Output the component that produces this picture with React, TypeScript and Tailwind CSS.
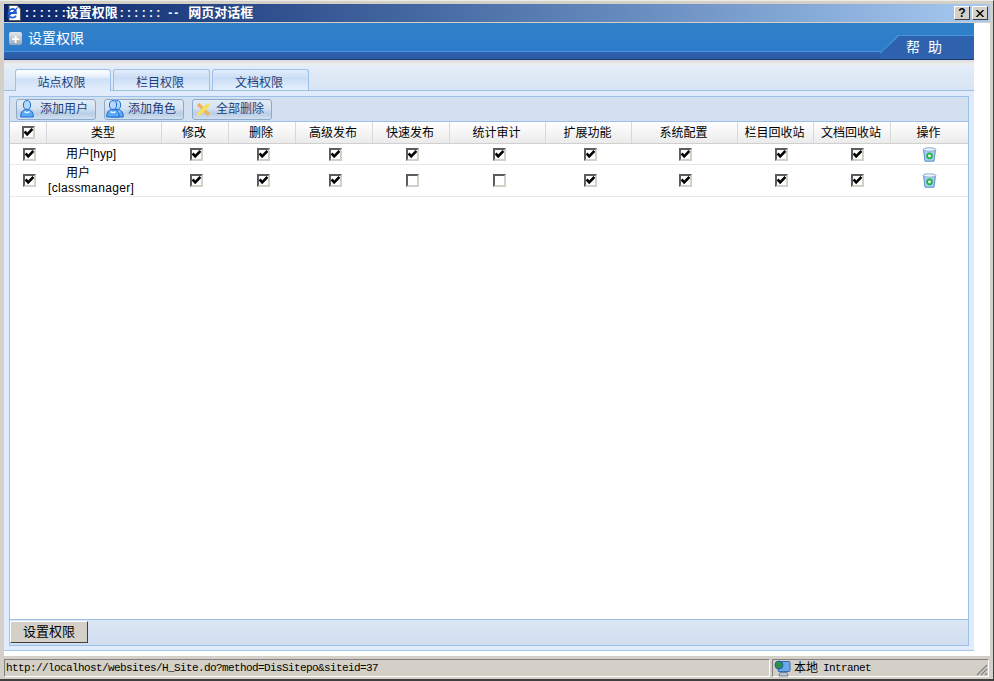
import React from 'react';

const headCols = 'grid grid-cols-[37px_115px_67px_67px_77px_77px_96px_86px_106px_76px_77px_77px]';
const rowCols = 'grid grid-cols-[38px_115px_67px_67px_77px_77px_97px_85px_105px_87px_65px_78px]';

const headers = ['类型', '修改', '删除', '高级发布', '快速发布', '统计审计', '扩展功能', '系统配置', '栏目回收站', '文档回收站', '操作'];

const rows = [
  { name: '用户[hyp]', tall: false, checks: [1, 1, 1, 1, 1, 1, 1, 1, 1] },
  { name: '[classmanager]', tall: true, checks: [1, 1, 1, 0, 0, 1, 1, 1, 1] },
];

function Check({ on = true }: { on?: boolean }) {
  return (
    <span className="block w-[13px] h-[13px] bg-white border-2 border-t-[#5c5c5c] border-l-[#5c5c5c] border-r-[#d4d0c8] border-b-[#d4d0c8]">
      {on && (
        <svg viewBox="0 0 9 9" className="block w-[9px] h-[9px]">
          <path d="M0.6 3.4 L3.2 6.4 L8.4 1" fill="none" stroke="#000" strokeWidth="2.6" />
        </svg>
      )}
    </span>
  );
}

function UserIcon({ double = false }: { double?: boolean }) {
  const person = (x: number) => (
    <g transform={`translate(${x} 0)`}>
      <ellipse cx="7" cy="5" rx="3.6" ry="4.4" fill="#b4d6fb" stroke="#1f6fd0" />
      <path d="M0.7 17 C0.7 11 3.5 9.6 7 9.6 C10.5 9.6 13.3 11 13.3 17 Z" fill="#5aa8f6" stroke="#1f6fd0" />
      <path d="M4.5 11.5 C5.5 13 8.5 13 9.5 11.5" fill="none" stroke="#e6f2ff" strokeWidth="1.4" />
    </g>
  );
  return (
    <svg viewBox={double ? '0 0 18 18' : '0 0 14 18'} className={double ? 'w-[18px] h-[18px] shrink-0' : 'w-[14px] h-[18px] shrink-0'}>
      {double && person(4)}
      {person(0)}
    </svg>
  );
}

function CrossIcon() {
  return (
    <svg viewBox="0 0 15 15" className="w-[15px] h-[15px] shrink-0">
      <path d="M2 2 L13 13" stroke="#f2b45a" strokeWidth="3.6" />
      <path d="M13 2 L2 13" stroke="#f6e05a" strokeWidth="3.6" />
    </svg>
  );
}

function RecycleIcon() {
  return (
    <svg viewBox="0 0 15 15" className="block w-[15px] h-[15px]">
      <path d="M1.5 2.5 L13.5 2.5 L12 14.2 L3 14.2 Z" fill="#a6cdf4" stroke="#5f8fc4" />
      <ellipse cx="7.5" cy="2.5" rx="6.4" ry="1.7" fill="#eaf2fa" stroke="#8aaed4" />
      <circle cx="7.5" cy="8.8" r="2.5" fill="#d8f0d8" stroke="#1fb33a" strokeWidth="1.7" />
    </svg>
  );
}

function ToolButton({ icon, label, className }: { icon: React.ReactNode; label: string; className: string }) {
  return (
    <div className={`w-[80px] h-[21px] flex items-center rounded-[3px] border border-[#8eaacb] bg-[linear-gradient(#e2ecf8_0,#d6e2f2_45%,#b8cde6_70%,#d2e0f0_100%)] text-[#1c3f78] whitespace-nowrap ${className}`}>
      {icon}
      <span>{label}</span>
    </div>
  );
}

function Tab({ label, active = false, width }: { label: string; active?: boolean; width: string }) {
  return (
    <div
      className={
        active
          ? `${width} h-[22px] -mb-px pt-[5px] pr-[3px] flex items-center justify-center rounded-t-[3px] border border-b-0 border-[#9dc0e8] bg-[linear-gradient(#ffffff_0,#e8f1fc_30%,#cfe1f8_45%,#e2edfb_100%)] text-[#1c3f78]`
          : `${width} h-[21px] pt-[5px] pr-[3px] flex items-center justify-center rounded-t-[3px] border border-b-0 border-[#9dc0e8] bg-[linear-gradient(#e4eefb_0,#c9dcf5_40%,#e6f0fc_100%)] text-[#1c3f78]`
      }
    >
      {label}
    </div>
  );
}

export default function App() {
  return (
    <div className="w-[994px] h-[681px] overflow-hidden flex flex-col bg-[#d4d0c8] text-[12px] text-black font-['Liberation_Sans','Noto_Sans_CJK_SC',sans-serif] border-t border-t-[#ecebe6] border-b-2 border-b-[#404040] border-r border-r-[#404040]">
      <div className="h-[3px] shrink-0" />
      <div className="ml-[4px] mr-[3px] flex-1 flex flex-col min-h-0">
        {/* barra de titulo */}
        <div className="h-[18px] shrink-0 flex items-center bg-gradient-to-r from-[#0a246a] to-[#a6caf0] pl-[2px] pr-[2px] text-white font-bold whitespace-pre">
          <svg viewBox="0 0 16 16" className="w-[16px] h-[16px] shrink-0">
            <path d="M3 0.5 H11 L14.5 4 V15.5 H3 Z" fill="#fff" stroke="#555" />
            <path d="M3.4 8 H10 C10 5 8.4 4 6.6 4 C4.2 4 2.6 6 2.6 8.4 C2.6 11 4.4 12.6 6.6 12.6 C8.2 12.6 9.4 11.8 10 10.6" fill="none" stroke="#2060d8" strokeWidth="1.8" />
            <path d="M0.8 11.5 C4 10 9 6 11.5 2.5" fill="none" stroke="#1848b8" strokeWidth="1.1" />
          </svg>
          <span className="ml-[3px]">: : : : : :</span>
          <span className="text-[13px]">设置权限</span>
          <span className="ml-[2px]">: : : : : :</span>
          <span className="ml-[8px] w-[20px] tracking-[2px]">--</span>
          <span className="text-[13px]">网页对话框</span>
          <div className="ml-auto flex gap-[2px]">
            <div className="w-[16px] h-[14px] flex items-center justify-center bg-[#d4d0c8] border border-t-white border-l-white border-r-[#404040] border-b-[#404040] text-black text-[12px] leading-none">?</div>
            <div className="w-[16px] h-[14px] flex items-center justify-center bg-[#d4d0c8] border border-t-white border-l-white border-r-[#404040] border-b-[#404040]">
              <svg viewBox="0 0 8 7" className="w-[8px] h-[7px]">
                <path d="M0.5 0 L7.5 7 M7.5 0 L0.5 7" stroke="#000" strokeWidth="1.4" />
              </svg>
            </div>
          </div>
        </div>
        <div className="h-px shrink-0 bg-[#d4d0c8]" />

        {/* conteudo do dialogo */}
        <div className="flex-1 min-h-0 flex flex-col bg-white">
          <div className="w-[970px] flex flex-col">
            <div className="h-[37px] shrink-0 flex justify-between bg-[linear-gradient(#3080c8_0,#2d7ccb_28px,#4a94dc_28px,#4a94dc_29px,#2f62ae_29px,#2c5aa4_36px,#1c3a6e_36px)]">
              <div className="flex items-center h-[31px] pl-[5px] gap-[6px] text-white text-[14px]">
                <span className="w-[13px] h-[13px] flex items-center justify-center rounded-[2px] bg-gradient-to-b from-[#e4e8ec] to-[#97a6b6] text-white font-bold text-[14px] leading-none">+</span>
                <span>设置权限</span>
              </div>
              <div className="self-start mt-[12px] w-[94px] h-[24px] bg-[#4a94dc] [clip-path:polygon(18px_0,100%_0,100%_100%,0_100%,0_18px)]">
                <div className="h-[24px] pl-[26px] gap-[8px] flex items-center text-white text-[14px] bg-[#2f62ae] [clip-path:polygon(19px_1px,100%_1px,100%_100%,0_100%,0_19px)]">
                  <span>帮</span>
                  <span>助</span>
                </div>
              </div>
            </div>
            <div className="h-[5px] shrink-0 bg-gradient-to-b from-[#dcdcdc] to-[#f0f0f0]" />

            <div className="h-[26px] shrink-0 flex items-end pl-[11px] gap-[2px] bg-gradient-to-b from-[#e4edf8] to-[#d8e4f3] border-b border-b-[#9fc0dc]">
              <Tab label="站点权限" active width="w-[96px]" />
              <Tab label="栏目权限" width="w-[97px]" />
              <Tab label="文档权限" width="w-[97px]" />
            </div>

            <div className="h-[560px] shrink-0 px-[5px] pt-[5px] bg-[#e0ecfb] border-b border-b-[#a8c8e8]">
              <div className="h-[550px] flex flex-col border border-[#9dc0e8] bg-white">
                <div className="h-[25px] shrink-0 flex items-center pl-[6px] gap-[8px] bg-[#d3e0f0] border-b border-b-[#9dc0e8]">
                  <ToolButton icon={<UserIcon />} label="添加用户" className="pl-[3px] gap-[6px]" />
                  <ToolButton icon={<UserIcon double />} label="添加角色" className="pl-px gap-[4px]" />
                  <ToolButton icon={<CrossIcon />} label="全部删除" className="pl-[3px] gap-[5px]" />
                </div>

                <div className={`${headCols} h-[22px] shrink-0 bg-gradient-to-b from-[#ffffff] to-[#ebebeb] border-b border-b-[#d0d0d0]`}>
                  <div className="flex items-center justify-center border-r border-r-[#d8d8d8]">
                    <Check />
                  </div>
                  {headers.map((h) => (
                    <div key={h} className="flex items-center justify-center pr-[2px] border-r border-r-[#d8d8d8] last:border-r-0">
                      {h}
                    </div>
                  ))}
                </div>

                {rows.map((row) => (
                  <div key={row.name} className={`${rowCols} ${row.tall ? 'h-[32px]' : 'h-[21px]'} shrink-0 border-b border-b-[#e8e8e8]`}>
                    <div className="flex items-center justify-center">
                      <Check />
                    </div>
                    {row.tall ? (
                      <div className="flex flex-col justify-center leading-[15px] whitespace-nowrap">
                        <span className="pl-[18px]">用户</span>
                        <span className="tracking-[0.35px]">{row.name}</span>
                      </div>
                    ) : (
                      <div className="flex items-center pl-[18px] whitespace-nowrap">{row.name}</div>
                    )}
                    {row.checks.map((c, i) => (
                      <div key={i} className="flex items-center justify-center">
                        <Check on={c === 1} />
                      </div>
                    ))}
                    <div className="flex items-center justify-center">
                      <RecycleIcon />
                    </div>
                  </div>
                ))}

                <div className="flex-1" />

                <div className="h-[26px] shrink-0 pt-px bg-gradient-to-b from-[#dbe6f4] to-[#d0deef] border-t border-t-[#9dc0e8]">
                  <div className="w-[78px] h-[22px] flex items-center justify-center bg-[#d4d0c8] border border-t-white border-l-white border-r-[#404040] border-b-[#404040] text-[13px]">
                    设置权限
                  </div>
                </div>
              </div>
            </div>
          </div>
        </div>

        {/* barra de status */}
        <div className="h-[23px] shrink-0 flex pt-[3px] pb-[2px] gap-[2px] pr-px bg-[#d4d0c8]">
          <div className="w-[766px] flex items-center pl-px border border-t-[#808080] border-l-[#808080] border-r-white border-b-white font-['Liberation_Mono',monospace] text-[11px] tracking-[-0.6px] whitespace-nowrap">
            http://localhost/websites/H_Site.do?method=DisSitepo&amp;siteid=37
          </div>
          <div className="flex-1 flex items-center pl-px gap-[3px] border border-t-[#808080] border-l-[#808080] border-r-white border-b-white whitespace-nowrap">
            <svg viewBox="0 0 17 17" className="w-[17px] h-[17px] shrink-0">
              <rect x="4" y="1.5" width="12" height="10" rx="1" fill="#6aa8ec" stroke="#3a6ab0" />
              <circle cx="5" cy="5" r="4" fill="#2f8f4a" stroke="#1f5fa8" />
              <path d="M6 12.5 H13 L14 16 H5 Z" fill="#b8c4d4" stroke="#6f7f94" />
            </svg>
            <span>本地</span>
            <span className="ml-[2px] font-['Liberation_Mono',monospace] text-[11px] tracking-[-0.6px]">Intranet</span>
            <svg viewBox="0 0 12 12" className="ml-auto self-end w-[12px] h-[12px] shrink-0">
              <path d="M11 1 L1 11 M11 5 L5 11 M11 9 L9 11" stroke="#808080" strokeWidth="1.2" />
            </svg>
          </div>
        </div>
      </div>
    </div>
  );
}
